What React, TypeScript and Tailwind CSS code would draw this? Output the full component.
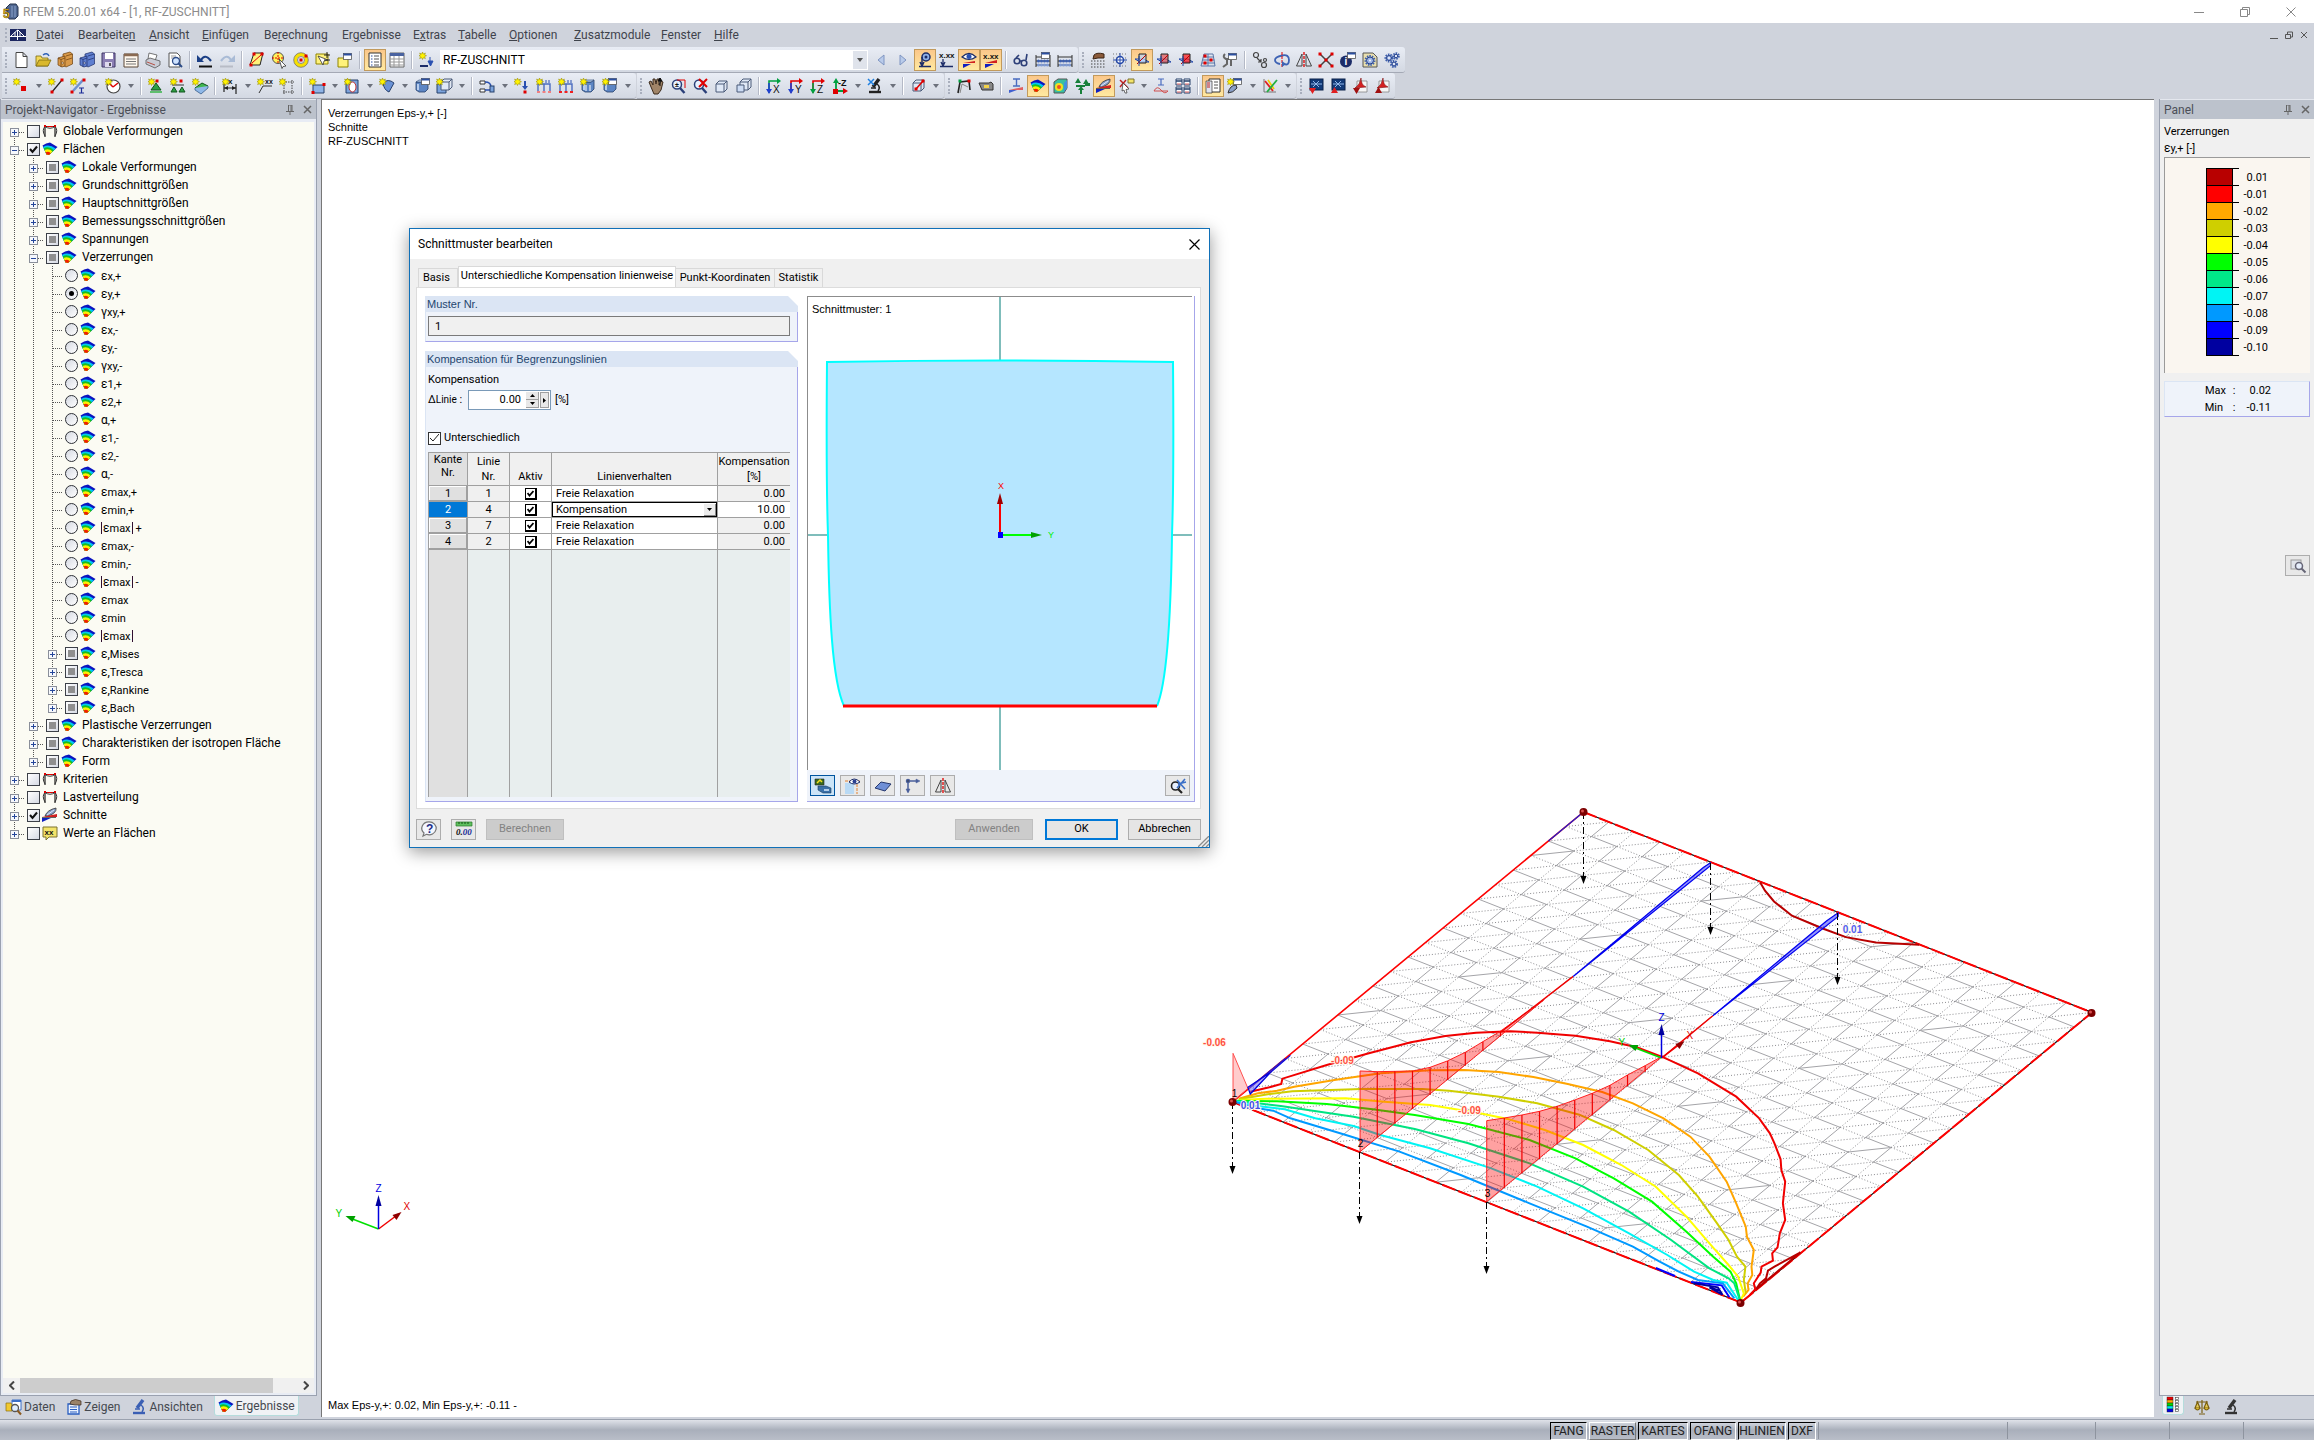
import React, { ReactNode } from "react";

const UI = "font-[Roboto,'Noto_Sans',sans-serif]";
const DLG = "font-[Roboto,'Liberation_Sans',sans-serif]";
const ARIAL = "font-['Liberation_Sans',Arial,sans-serif]";

/* ---------- small drawings ---------- */

const Star = ({ x = 0, y = 0 }: { x?: number; y?: number }) => (
  <path
    transform={`translate(${x} ${y})`}
    d="M3.5 0 4.4 2 6.4 1 5.6 3 7.5 3.7 5.6 4.6 6.4 6.6 4.4 5.7 3.5 7.5 2.7 5.7.6 6.6 1.5 4.6 0 3.7 1.5 3 .6 1 2.7 2z"
    fill="#fff200"
    stroke="#8f8400"
    strokeWidth=".5"
  />
);

const Dot = ({ x, y, c = "#e00000" }: { x: number; y: number; c?: string }) => (
  <rect x={x - 1.5} y={y - 1.5} width="3" height="3" fill={c} />
);

const Fan = () => (
  <g>
    <path d="M.5 4.5Q4 1.800 8 1.500L15.500 6 7 14 4.500 13.500z" fill="#0a14c0" />
    <path d="M1 6Q7 2.600 13.600 7.600L7 14 4.500 13.500z" fill="#00c8f0" />
    <path d="M1.800 7.200Q7 4.600 12 9.200L7 14 4.500 13.500z" fill="#16c020" />
    <path d="M2.600 9Q7 7 10.500 10.600L7 14 4.500 13.500z" fill="#fff000" />
    <path d="M3.600 11.300Q6.500 10 8.800 12.200L7 14 4.500 13.500z" fill="#f02000" />
  </g>
);

const Arch = () => (
  <g fill="none">
    <path d="M3 14V4M13 14V4M3 3.5h10" stroke="#222" strokeWidth="1.2" />
    <path d="M3 13Q-.5 7 3 3.5M13 13Q16.500 7 13 3.500M3 3.500Q8 7 13 3.500" stroke="#333" />
    <path d="M5 3.500h6" stroke="#e00000" />
    <rect x="2" y="2" width="2" height="2" fill="#e00000" />
    <rect x="12" y="2" width="2" height="2" fill="#e00000" />
  </g>
);

const Feather = () => (
  <g>
    <path d="M3 9Q5 3 14 1Q15 6 6 9z" fill="#8aa0c8" stroke="#333" strokeWidth=".8" />
    <path d="M5 8 12 3" stroke="#dfe8fa" />
    <path d="M0 10h15V7z" fill="#d02020" />
    <path d="M0 11h9L0 15z" fill="#1020c0" />
    <path d="M0 10.500h14" stroke="#222" strokeWidth=".7" />
  </g>
);

const Cup = () => (
  <g>
    <path d="M2 4h9l3-2v9l-3 3H5L2 12z" fill="#5d86c4" stroke="#27406b" strokeWidth=".8" />
    <path d="M2 4 5 2h9l-3 2z" fill="#b4cdf0" stroke="#27406b" strokeWidth=".6" />
    <path d="M4 6v6" stroke="#d6e5fb" strokeWidth="1.500" />
  </g>
);

const Cabinet = ({ c, d }: { c: string; d: string }) => (
  <g stroke={d} strokeWidth=".7">
    <path d="M6 2 13 0 15.500 2v10L9 15 6 13z" fill={c} />
    <path d="M1 6 8 4v10l-3 1-4-2z" fill={c} />
    <path d="M1 6 4 7.500 8 6M4 7.500V15M9 4l6.500-2M9 8l6-2" fill="none" />
    <circle cx="5.500" cy="11" r="1" fill="#fff" />
  </g>
);

const Win = ({ x = 6, y = 0 }: { x?: number; y?: number }) => (
  <g transform={`translate(${x} ${y})`}>
    <rect x=".5" y=".5" width="8" height="6" fill="#fff" stroke="#555" strokeWidth=".8" />
    <path d="M.5 1.500h8" stroke="#2b4fa0" strokeWidth="2" />
  </g>
);

const Lens = () => (
  <g>
    <circle cx="7" cy="6.500" r="4.500" fill="#e8f1ff" stroke="#2a3f78" strokeWidth="1.500" />
    <path d="M10 10l4.500 5" stroke="#2a3f78" strokeWidth="2.400" />
  </g>
);

const Beads = () => (
  <g>
    <path d="M1 3v12M15 3v12M1 5h14M1 9h14M1 13h14" stroke="#333" fill="none" />
    {[3, 6, 9, 12].map((x) => (
      <g key={x}>
        <circle cx={x + 0.5} cy="9" r="1.500" fill="#3b5fb0" />
        <circle cx={x + 0.5} cy="13" r="1.500" fill="#7f9bd6" />
      </g>
    ))}
  </g>
);

const Frames = ({ c = "#f02020" }: { c?: string }) => (
  <g fill="none">
    <path d="M2 13V6h6v7M8 6h6v7" stroke="#4a6cc0" strokeWidth="1.400" />
    <path d="M3 2v3M6 2v3M10 2v3M13 2v3" stroke="#2a50b0" />
    <path d="M1 14h3M6.500 14h3M12 14h3" stroke={c} strokeWidth="2" />
  </g>
);

const Planes = ({ c }: { c: string }) => (
  <g strokeWidth="1">
    <path d="M1 7h9l5 3H6z" fill="#cfe0fb" stroke="#2448a8" />
    <path d="M5 2h7v9H5z" fill={c} fillOpacity=".7" stroke="#222" />
    <path d="M3 12 12 3" stroke="#c00000" />
    <path d="M5 14V4" stroke="#2448a8" />
  </g>
);

const Gear = ({ x, y, r }: { x: number; y: number; r: number }) => (
  <g>
    <circle cx={x} cy={y} r={r} fill="none" stroke="#3d5fae" strokeWidth="2" strokeDasharray="1.500 1" />
    <circle cx={x} cy={y} r={r - 1} fill="#9db4e4" stroke="#24408a" />
    <circle cx={x} cy={y} r=".9" fill="#fff" />
  </g>
);

const Micro = ({ c = "#222" }: { c?: string }) => (
  <g fill="none" stroke={c}>
    <path d="M12 1 6 9" strokeWidth="3.400" />
    <path d="M10 6q4 3 1 7M4 10h5" strokeWidth="1.500" />
    <path d="M2 14h12" strokeWidth="2.400" />
  </g>
);

const Box = ({ x = 2, y = 2 }: { x?: number; y?: number }) => (
  <g transform={`translate(${x} ${y})`} fill="#dfe8f6" stroke="#4a5a78">
    <path d="M0 4h8v8H0zM0 4l3-3h8l-3 3M8 12l3-3V1" />
  </g>
);

const AxisPair = ({ a, b, l }: { a: string; b: string; l: string }) => (
  <g>
    <path d="M3 15V3h10" fill="none" stroke={a} strokeWidth="1.600" />
    <path d="M11 0l4 3-4 3z" fill={a} />
    <path d="M3 5v8" stroke={b} strokeWidth="1.600" />
    <path d="M0 11h6l-3 5z" fill={b} />
    <text x="7" y="15" fontSize="10" fontFamily="Liberation Sans" fill="#111">
      {l}
    </text>
  </g>
);

const Label = ({ x, y, s, t, c = "#111" }: { x: number; y: number; s: number; t: string; c?: string }) => (
  <text x={x} y={y} fontSize={s} fontWeight="700" fontFamily="Liberation Sans" fill={c}>
    {t}
  </text>
);

const Screen = ({ up }: { up?: boolean }) => (
  <g>
    <rect x="2" y="1" width="13" height="11" fill="#123a78" stroke="#0a2148" />
    <path d="M5 3l6 6M11 3 5 9M3 6h11" stroke="#8fb6ea" />
    <path d={up ? "M1 15h7L4.500 9z" : "M1 10h7l-3.500 6z"} fill="#e02020" />
  </g>
);

const Pdf = ({ up }: { up?: boolean }) => (
  <g>
    <path d="M5 3h10v11H5z" fill="#f6f6f6" stroke="#777" strokeWidth=".7" />
    <path d="M9 0Q8 7 3 10L14 9Q9 7 9 0z" fill="#d42020" stroke="#801010" strokeWidth=".6" />
    <path d={up ? "M1 15h7L4.500 9z" : "M1 10h7l-3.500 6z"} fill="#a01010" />
  </g>
);

const icons: Record<string, ReactNode> = {
  fan: <Fan />,
  arch: <Arch />,
  feather: <Feather />,
  note: (
    <g>
      <path d="M1 2h14v10H7l-3 3v-3H1z" fill="#f3e46a" stroke="#7c7230" />
      <Label x={2.500} y={10} s={8} t="xx" />
    </g>
  ),
  neu: <path d="M3 .5h7l4 4v11H3zM10 .5v4h4" fill="#fff" stroke="#444" />,
  open: (
    <g stroke="#7b6a10" strokeWidth=".8">
      <path d="M1 4h5l1 2h6v8H1z" fill="#f3d95a" />
      <path d="M1 14 4 8h12l-3 6z" fill="#d9b82c" />
      <path d="M8 3q4-3 6 1" fill="none" stroke="#2f62b8" strokeWidth="1.500" />
    </g>
  ),
  cab1: <Cabinet c="#d99a4a" d="#6a3e0c" />,
  cab2: <Cabinet c="#5f7fd0" d="#1c2c68" />,
  save: (
    <g>
      <path d="M1 1h13v14H1z" fill="#8b7fb4" stroke="#3e3766" />
      <path d="M4 1h8v6H4z" fill="#fff" />
      <path d="M4 10h7v5H4z" fill="#ded9ee" />
      <path d="M9 11v3" stroke="#222" strokeWidth="1.500" />
    </g>
  ),
  report: (
    <g>
      <path d="M1 2h14v13H1z" fill="#fff8ee" stroke="#5a4636" />
      <path d="M1 3h14" stroke="#8a6a52" strokeWidth="2.500" />
      <path d="M3 7h10M3 9.500h10M3 12h10" stroke="#777" />
    </g>
  ),
  print: (
    <g stroke="#555" strokeWidth=".8">
      <path d="M4 1l8 2-2 6-7-2z" fill="#fff" />
      <path d="M1 8l4-2 10 3v4l-5 3-9-4z" fill="#c9ccd6" />
      <path d="M2 10l8 3" stroke="#b03020" />
    </g>
  ),
  preview: (
    <g>
      <path d="M2 1h8l3 3v11H2z" fill="#fff" stroke="#555" />
      <path d="M4 4h5M4 6h4" stroke="#999" />
      <circle cx="9" cy="9" r="3.500" fill="#cfe3ff" stroke="#2d4c88" strokeWidth="1.300" />
      <path d="M11 11l4 4" stroke="#2d4c88" strokeWidth="2" />
    </g>
  ),
  undo: (
    <g>
      <path d="M4 8Q8 1 14 9" fill="none" stroke="#1b3f86" strokeWidth="2.200" />
      <path d="M0 3v7h7z" fill="#1b3f86" />
      <path d="M2 14.500h13" stroke="#111" strokeWidth="2" />
    </g>
  ),
  redo: (
    <g>
      <path d="M12 8Q8 1 2 9" fill="none" stroke="#a9bbd6" strokeWidth="2.200" />
      <path d="M16 3v7H9z" fill="#a9bbd6" />
      <path d="M1 14.500h13" stroke="#b8bcc6" strokeWidth="2" />
    </g>
  ),
  selPar: (
    <g>
      <path d="M5 1h9l-3 12H1z" fill="#fff27a" stroke="#222" />
      <path d="M3 11 12 3" stroke="#e00000" />
      <Dot x={5} y={2} />
      <Dot x={13} y={2} />
      <Dot x={2} y={13} />
    </g>
  ),
  selCirc: (
    <g>
      <circle cx="7" cy="6" r="5.500" fill="#fff25a" stroke="#555" />
      <path d="M7 0v12M1 6h12" stroke="#e00000" strokeDasharray="2 1" />
      <path d="M8 7l7 7-3 .5-1 2z" fill="#fff" stroke="#333" strokeWidth=".8" />
    </g>
  ),
  selRing: (
    <g>
      <circle cx="8" cy="8" r="5.500" fill="none" stroke="#f6e000" strokeWidth="3.500" />
      <circle cx="8" cy="8" r="7.300" fill="none" stroke="#666" strokeWidth=".7" />
      <circle cx="8" cy="8" r="3.500" fill="none" stroke="#666" strokeWidth=".7" />
      <Dot x={8} y={8} />
      <Dot x={13} y={4} />
    </g>
  ),
  selPlus: (
    <g>
      <path d="M1 2h12v10H1z" fill="#fff27a" stroke="#8f8400" />
      <path d="M3 4l5 9 1-4 4-1z" fill="#fff" stroke="#333" strokeWidth=".8" />
      <path d="M9 3h6M12 0v6M9 8h6" stroke="#222" />
    </g>
  ),
  selWin: (
    <g>
      <path d="M1 6h10v9H1z" fill="#fff27a" stroke="#8f8400" />
      <Win x={6} y={1} />
    </g>
  ),
  list: (
    <g>
      <path d="M2 1h12v14H2z" fill="#fff" stroke="#333" />
      <path d="M4 4h1.500M4 7h1.500M4 10h1.500M4 13h1.500" stroke="#2b4fa0" />
      <path d="M7 4h5M7 7h5M7 10h5M7 13h5" stroke="#555" />
    </g>
  ),
  table: (
    <g>
      <path d="M1 1h14v14H1z" fill="#fff" stroke="#666" />
      <path d="M1 2.500h14" stroke="#4a63a0" strokeWidth="3" />
      <path d="M1 7h14M1 10h14M1 13h14M5 4v11M10 4v11" stroke="#999" />
    </g>
  ),
  starLoad: (
    <g>
      <Star />
      <path d="M1 14h8" stroke="#1c2c68" strokeWidth="2" />
      <path d="M11 5v5M9 9h5l-2.500 5z" fill="#2a50b0" stroke="#2a50b0" />
    </g>
  ),
  prev: <path d="M11 3v10L5 8z" fill="#b9cbea" stroke="#7f95c2" />,
  next: <path d="M5 3v10l6-5z" fill="#b9cbea" stroke="#7f95c2" />,
  resP: (
    <g>
      <circle cx="9" cy="5" r="4" fill="#8fb0e8" stroke="#1c2c68" strokeWidth="1.500" />
      <circle cx="9" cy="5" r="1.500" fill="#1c2c68" />
      <path d="M5 5v7M3 10l2 4 2-4M2 14.500h12" stroke="#1c2c68" strokeWidth="1.500" fill="none" />
    </g>
  ),
  xxLoad: (
    <g>
      <Label x={0} y={6} s={8} t="x.xx" />
      <path d="M4 7v5M2 10l2 4 2-4M1 14.500h13" stroke="#1c2c68" strokeWidth="1.300" fill="none" />
    </g>
  ),
  eye: (
    <g>
      <path d="M1 5Q8-2 15 5 8 10 1 5z" fill="#fff" stroke="#1c2c68" strokeWidth="1.200" />
      <circle cx="8" cy="4.500" r="2.500" fill="#2a50b0" />
      <path d="M2 11h12v-2z" fill="#d02020" />
      <path d="M2 12v4l8-4z" fill="#1020c0" />
    </g>
  ),
  xxx: (
    <g>
      <Label x={0} y={7} s={8} t="x.xx" />
      <path d="M2 11h12V8z" fill="#d02020" />
      <path d="M2 12v4l9-4z" fill="#1020c0" />
    </g>
  ),
  glasses: (
    <g fill="none" stroke="#2d3f78" strokeWidth="1.600">
      <circle cx="4" cy="9" r="2.800" />
      <circle cx="11" cy="11" r="2.800" />
      <path d="M6 9h3M3 6l3-3M13 8l1-6" />
    </g>
  ),
  beads: <Beads />,
  beadsWin: (
    <g>
      <Beads />
      <Win x={6} y={0} />
    </g>
  ),
  handGrid: (
    <g>
      <path d="M4 3q3-3 10-1v4H8L3 7z" fill="#8a5a3a" stroke="#3b2414" />
      <path d="M1 9h14M1 12h14M1 15h14" stroke="#444" strokeDasharray="1.500 1.500" />
    </g>
  ),
  snap: (
    <g>
      <path d="M1 2h14M1 14h14M1 6h14M1 10h14" stroke="#777" strokeDasharray="1 2" />
      <circle cx="8" cy="8" r="3.500" fill="#fff" stroke="#2448a8" strokeWidth="1.500" />
      <path d="M8 1v14M1 8h14" stroke="#2448a8" />
    </g>
  ),
  pl1: <Planes c="#b9d2f6" />,
  pl2: <Planes c="#e05050" />,
  pl3: <Planes c="#ff1010" />,
  grid3: (
    <g>
      <path d="M4 2h9l2 12H1zM2.500 8h12M8 2v12M3 5h11M2 11h13" fill="none" stroke="#5a76a8" />
      <Dot x={5} y={4} />
      <Dot x={11} y={8} />
      <Dot x={5} y={11} />
    </g>
  ),
  clampWin: (
    <g>
      <path d="M3 2q-3 3 1 5h4M5 8v4l-4 3M9 8v6" fill="none" stroke="#666" strokeWidth="2" />
      <Win x={6} y={1} />
    </g>
  ),
  link: (
    <g fill="none" stroke="#444" strokeWidth="1.200">
      <circle cx="4" cy="3" r="2.500" />
      <circle cx="12" cy="13" r="2.500" />
      <circle cx="13" cy="8" r="1.500" />
      <path d="M5 6l4 4M9 7v3H6" />
    </g>
  ),
  rotate: (
    <g fill="none">
      <path d="M6 12Q1 11 1 8t7-4.500 7 4.500-5 4" stroke="#3d62b4" strokeWidth="1.800" />
      <path d="M8 0v16" stroke="#e00000" strokeDasharray="3 1" />
      <path d="M8 9l4 3-4 3z" fill="#3d62b4" />
    </g>
  ),
  mirror: (
    <g fill="none" stroke="#444">
      <path d="M6 2v12H.5zM10 2v12h5.500z" />
      <path d="M8 0v16" stroke="#e00000" strokeWidth="1.300" strokeDasharray="3 1" />
    </g>
  ),
  cross: (
    <g>
      <path d="M2 2l12 12M14 2 2 14" stroke="#444" strokeWidth="1.500" />
      <Dot x={2} y={2} />
      <Dot x={14} y={2} />
      <Dot x={2} y={14} />
      <Dot x={14} y={14} />
      <Dot x={8} y={8} />
    </g>
  ),
  info: (
    <g>
      <circle cx="6" cy="9.500" r="6" fill="#1c2c68" />
      <Label x={4.500} y={13} s={10} t="i" c="#fff" />
      <Win x={7} y={0} />
    </g>
  ),
  gearDoc: (
    <g>
      <path d="M1 1h10l4 4v10H1z" fill="#e9dfae" stroke="#555" />
      <Gear x={8} y={8.500} r={4.500} />
    </g>
  ),
  gears: (
    <g>
      <Gear x={5} y={6} r={3.500} />
      <Gear x={12} y={4} r={2.800} />
      <Gear x={10} y={12} r={3} />
    </g>
  ),
  node: (
    <g>
      <Star />
      <rect x="8" y="8" width="5" height="5" fill="#e00000" />
    </g>
  ),
  line: (
    <g>
      <path d="M4 14 14 2" stroke="#222" strokeWidth="1.200" />
      <Star />
      <Dot x={14} y={2} />
      <Dot x={4} y={14} />
    </g>
  ),
  member: (
    <g>
      <path d="M3 13 13 2" stroke="#6f93cf" strokeWidth="2.500" />
      <Star />
      <Dot x={14} y={2} />
      <Dot x={2} y={14} />
      <path d="M9 10h5M11.500 10v5M9 15h5" stroke="#1c2c98" strokeWidth="1.200" />
    </g>
  ),
  arc: (
    <g>
      <circle cx="8.500" cy="8.500" r="6.500" fill="#fff" stroke="#444" strokeWidth="1.200" />
      <path d="M8 9 4 5M8 9l5-4" stroke="#e00000" strokeWidth="1.500" />
      <Star />
    </g>
  ),
  support: (
    <g>
      <path d="M8 5l5 7H3z" fill="#2ea043" stroke="#10541e" />
      <path d="M2 13h12v2H2z" fill="#5fbf6f" />
      <Dot x={9} y={3} />
      <Star />
    </g>
  ),
  support2: (
    <g>
      <path d="M4 9l3 5H1zM12 9l3 5H9z" fill="#2ea043" stroke="#10541e" />
      <path d="M2 7h12" stroke="#333" />
      <Dot x={11} y={3} />
      <Star />
    </g>
  ),
  supportSurf: (
    <g>
      <path d="M3 10l7-5 6 3-7 6z" fill="#3fb650" stroke="#10541e" />
      <path d="M3 10v2l6 4 7-6V8" fill="#8fb8e8" stroke="#285080" strokeWidth=".7" />
      <Star />
    </g>
  ),
  dim: (
    <g>
      <path d="M2 4v10M14 6v10M2 10h12" stroke="#222" strokeWidth="1.200" />
      <path d="M2 10l4-2v4zM14 10l-4-2v4z" fill="#222" />
      <Label x={6} y={6} s={8} t="x" />
      <Star />
    </g>
  ),
  dimxx: (
    <g>
      <path d="M2 15 6 8h9" fill="none" stroke="#333" />
      <Label x={8} y={6} s={7} t="xx" />
      <Star />
    </g>
  ),
  frameGrid: (
    <g>
      <path d="M4 4h11M4 14h11M5 2v14M13 2v14" stroke="#444" strokeDasharray="1.500 1" />
      <Star />
    </g>
  ),
  surf: (
    <g>
      <path d="M4 7h11v8H4z" fill="#8fb4e6" stroke="#27406b" />
      <Dot x={15} y={6.500} />
      <Dot x={4} y={14.500} />
      <Star />
    </g>
  ),
  opening: (
    <g>
      <path d="M2 2h12v13H2z" fill="#7ba3dc" stroke="#27406b" />
      <ellipse cx="8.500" cy="9" rx="3.500" ry="5" fill="#fff" stroke="#c03030" />
      <Star />
    </g>
  ),
  shell: (
    <g>
      <path d="M4 5Q9 0 15 5l-5 9Q5 12 4 5z" fill="#6b93d6" stroke="#27406b" />
      <Star />
    </g>
  ),
  cup: <Cup />,
  cupWin: (
    <g>
      <Cup />
      <Win x={7} y={0} />
    </g>
  ),
  cupBox: (
    <g>
      <path d="M1 6h9v9H1z" fill="#7ba3dc" stroke="#27406b" />
      <Box x={5} y={0} />
      <Star />
    </g>
  ),
  connect: (
    <g>
      <path d="M1 3h5v3H1zM1 11h5v3H1z" fill="#fff" stroke="#333" />
      <path d="M6 4q6 0 6 5M6 12h6" stroke="#2a50b0" strokeWidth="1.400" fill="none" />
      <rect x="11" y="8" width="4" height="6" fill="#7ba3dc" stroke="#27406b" />
    </g>
  ),
  load1: (
    <g>
      <path d="M11 3v6" stroke="#2a50b0" strokeWidth="2" />
      <path d="M8 8h6l-3 4z" fill="#2a50b0" />
      <Dot x={11} y={14} />
      <Star />
    </g>
  ),
  load2: (
    <g>
      <Frames c="#f08080" />
      <Star />
    </g>
  ),
  load3: (
    <g>
      <Frames />
      <Star />
    </g>
  ),
  load4: (
    <g>
      <Cup />
      <path d="M6 7v6M10 7v6" stroke="#fff" />
      <Star />
    </g>
  ),
  load5: (
    <g>
      <Cup />
      <Win x={6} y={0} />
      <Star />
    </g>
  ),
  hand: (
    <g>
      <path d="M3 9 1 4l2-1 2 4V1h2l1 5 1-5h2v6l2-4 2 1-2 8-3 4H6z" fill="#a08468" stroke="#3b2a1c" />
      <path d="M12 0l2 3h-4zM12 8V0" stroke="#111" />
    </g>
  ),
  zoomWin: (
    <g>
      <Lens />
      <path d="M7 2h8v8" fill="none" stroke="#e00000" />
      <Label x={5} y={9} s={7} t="±" />
    </g>
  ),
  zoomX: (
    <g>
      <Lens />
      <path d="M7 1l8 8M15 1 7 9" stroke="#e00000" strokeWidth="2" />
    </g>
  ),
  cube: <Box />,
  cubes: (
    <g>
      <Box x={4} y={0} />
      <path d="M1 7h7v7H1z" fill="#cddcf4" stroke="#4a5a78" />
    </g>
  ),
  ax1: <AxisPair a="#00a040" b="#2040d0" l="X" />,
  ax2: <AxisPair a="#e00000" b="#2040d0" l="Y" />,
  ax3: <AxisPair a="#e00000" b="#00a040" l="Z" />,
  ax4: (
    <g>
      <path d="M4 13V4M4 13h8" stroke="#00a040" strokeWidth="1.800" />
      <path d="M1 5h6L4 0z" fill="#00a040" />
      <path d="M11 10l5 3-5 3zM1 11h5v5H1z" fill="#e00000" />
      <Label x={6} y={8} s={9} t="-Z" />
    </g>
  ),
  micro: (
    <g>
      <Micro />
      <path d="M1 1l6 6M7 1 1 7" stroke="#2080e0" strokeWidth="1.500" />
    </g>
  ),
  microBlue: <Micro c="#3a5fb4" />,
  microDark: <Micro c="#333" />,
  clip: (
    <g>
      <Box x={3} y={1} />
      <path d="M6 11 13 3" stroke="#e00000" strokeWidth="1.500" />
      <Dot x={6} y={11} />
      <Dot x={13} y={3} />
    </g>
  ),
  deform: (
    <g fill="none">
      <path d="M2 15 4 4l9-1 1 9" stroke="#222" strokeWidth="1.600" />
      <path d="M4 15 6 6l6 3" stroke="#888" />
      <Dot x={4} y={3} c="#00a040" />
      <Dot x={13} y={3} />
    </g>
  ),
  camera: (
    <g>
      <path d="M1 5h10l2-1 2 2v6H4z" fill="#888" stroke="#333" />
      <path d="M6 7h5v3H6z" fill="#f2d24a" />
    </g>
  ),
  iRed: (
    <g>
      <path d="M5 1h7M8.500 1v7M5 8h7" stroke="#4a6cc0" strokeWidth="1.400" />
      <path d="M1 12h14V9z" fill="#e06060" />
      <path d="M1 12v3l8-3z" fill="#4060d0" />
    </g>
  ),
  solidRes: (
    <g>
      <path d="M2 4 6 1h9v9l-3 5H2z" fill="#38c0a0" stroke="#555" />
      <circle cx="7" cy="9" r="4" fill="#f0e020" />
      <circle cx="7" cy="9" r="2" fill="#f05020" />
      <path d="M12 5v9l3-4V2z" fill="#4090e0" />
    </g>
  ),
  reac: (
    <g fill="#18803a">
      <path d="M2 7h9v2H2zM11 5h5v3h-5z" />
      <path d="M4 0l3 5H1zM12 1l3 5H9z" />
      <path d="M6 16v-4H4l3-4 3 4H8v4z" />
    </g>
  ),
  featherRes: <Feather />,
  pick: (
    <g>
      <path d="M2 2l8 8M8 2 2 9" stroke="#c02020" strokeWidth="1.500" />
      <path d="M5 5l6 6-3 .5L9 15H7l-1-3-2 1z" fill="#fff" stroke="#333" strokeWidth=".7" />
      <path d="M10 1h6v4h-6z" fill="#f3e46a" stroke="#7c7230" />
    </g>
  ),
  iWave: (
    <g fill="none">
      <path d="M5 1h6M8 1v6M5 7h6" stroke="#4a6cc0" strokeWidth="1.200" />
      <path d="M1 13Q4 7 8 12t7 1M1 13h14" stroke="#d05050" />
    </g>
  ),
  panelIcon: (
    <g>
      <path d="M1 1h6v6H1zM9 1h6v6H9zM1 9h6v6H1zM9 9h6v6H9z" fill="#fff" stroke="#27406b" />
      <path d="M1 3h6M9 3h6M1 11h6M9 11h6" stroke="#27406b" strokeWidth="1.500" />
      <path d="M2 6h4M10 6h4M2 14h4M10 14h4" stroke="#e06060" />
    </g>
  ),
  legend: (
    <g>
      <path d="M4 1h11v13H4z" fill="#fff" stroke="#333" />
      <path d="M1 3h6v12H1z" fill="#e0e4ee" stroke="#333" strokeWidth=".7" />
      <path d="M2 5h3M2 7h3M2 9h3" stroke="#c02020" />
      <path d="M9 4h4M9 7h4M9 10h4" stroke="#555" />
    </g>
  ),
  cutWin: (
    <g>
      <path d="M1 15q2-8 8-8l1 3q-4 5-9 5z" fill="#8aa0c8" stroke="#333" />
      <Win x={6} y={0} />
      <Star />
    </g>
  ),
  iso: (
    <g fill="none" strokeWidth="1.800">
      <path d="M2 1v13h12" stroke="#777" strokeWidth="1" />
      <path d="M3 3l8 10" stroke="#e02020" />
      <path d="M6 2l6 9" stroke="#f0d000" />
      <path d="M15 2 5 14" stroke="#20b040" />
    </g>
  ),
  scrDown: <Screen />,
  scrUp: <Screen up />,
  pdfDown: <Pdf />,
  pdfUp: <Pdf up />,
  daten: (
    <g>
      <path d="M6 1h9v10H6z" fill="#fff" stroke="#3a6fc8" />
      <path d="M6 2h9" stroke="#3a6fc8" strokeWidth="2" />
      <path d="M0 4h5l1 2v6H0z" fill="#f2c930" stroke="#8a6d10" strokeWidth=".7" />
      <circle cx="9" cy="9" r="3.500" fill="#dfeeff" stroke="#555" strokeWidth="1.300" />
      <path d="M11.500 11.500l3.500 4" stroke="#8a5a20" strokeWidth="2" />
    </g>
  ),
  zeigen: (
    <g>
      <path d="M2 5h11v10H2z" fill="#eaf2ff" stroke="#2b5fc0" strokeWidth="1.300" />
      <path d="M4 8h7M4 10.500h7M4 13h7" stroke="#2b5fc0" />
      <path d="M5 2q4-3 10 0v4H9L4 5z" fill="#9a8268" stroke="#3b2a1c" strokeWidth=".7" />
    </g>
  ),
  colorList: (
    <g>
      {["#f00000", "#ffa800", "#00d800", "#00e8f0", "#0000e0"].map((c, i) => (
        <g key={c}>
          <rect x="2" y={i * 3} width="6" height="3" fill={c} stroke="#222" strokeWidth=".4" />
          <rect x="10.500" y={i * 3 + 0.5} width="3" height="2" fill="#fff" stroke="#444" strokeWidth=".6" />
        </g>
      ))}
    </g>
  ),
  scales: (
    <g fill="none" stroke="#7a5f10" strokeWidth="1.200">
      <path d="M8 1v13M2 3h12M5 15h6" />
      <path d="M1 9l2.500-6L6 9zM10 9l2.500-6L15 9z" fill="#e6cc58" />
      <path d="M1 9q2.500 4 5 0M10 9q2.500 4 5 0" fill="#d9b82c" />
    </g>
  ),
  help: (
    <g>
      <path d="M8 .8a7 6.500 0 1 1-2.500 12.500L2 15l1-3A7 6.500 0 0 1 8 .8z" fill="#f4f7ff" stroke="#777" strokeWidth="1.200" />
      <Label x={5} y={12} s={12} t="?" c="#1c2c88" />
    </g>
  ),
  units: (
    <g>
      <path d="M0 1h16v4H0z" fill="#5fbf5f" stroke="#2a7a2a" strokeWidth=".7" />
      <path d="M3 1v2M6 1v2M9 1v2M12 1v2" stroke="#155015" />
      <text x="0" y="14" fontSize="9" fontStyle="italic" fontWeight="700" fontFamily="Liberation Serif" fill="#111">
        0.<tspan fill="#1c2c98">00</tspan>
      </text>
    </g>
  ),
  renderMode: (
    <g>
      <path d="M0 1h9v6H0z" fill="#3a6a20" stroke="#222" strokeWidth=".6" />
      <path d="M2 5l3-3 2 2" stroke="#f4e020" strokeWidth="1.500" fill="none" />
      <path d="M3 8h8l5 2v5H8L3 12z" fill="#3a70a8" stroke="#1c3c60" strokeWidth=".6" />
      <path d="M9 12h5" stroke="#dcecff" strokeWidth="1.500" />
    </g>
  ),
  showDim: (
    <g>
      <path d="M0 5h9v11H0z" fill="#b9daf5" />
      <path d="M0 3h16M12 6v10" stroke="#e08030" strokeDasharray="3 1" />
      <path d="M4 4Q9-2 15 4 9 8 4 4z" fill="#fff" stroke="#1c2c68" />
      <circle cx="9.500" cy="3.500" r="2" fill="#2a3f90" />
    </g>
  ),
  plate: <path d="M0 10 6 4l10 2-6 7z" fill="#6f8fd6" stroke="#26386e" />,
  axes: (
    <g stroke="#4a5f9a" strokeWidth="1.500">
      <path d="M3 3h10M3 3v11" />
      <path d="M11 1l4 2-4 2zM1 11h4l-2 4z" fill="#4a5f9a" strokeWidth=".5" />
      <circle cx="3" cy="3" r="1.500" fill="#333" />
    </g>
  ),
  zoomFit: (
    <g>
      <circle cx="5.500" cy="8" r="4" fill="#e6eefc" stroke="#222" strokeWidth="1.600" />
      <path d="M8 11l4 4" stroke="#222" strokeWidth="2.200" />
      <path d="M7 2l8 9M15 1 7 10M8 6l8-2" stroke="#3a6fc8" strokeWidth="1.600" />
    </g>
  ),
  zoomBox: (
    <g>
      <rect x="1" y="2" width="10" height="9" fill="#dfe3ea" stroke="#999" />
      <circle cx="9" cy="8" r="3.500" fill="#e6eefc" stroke="#667" strokeWidth="1.500" />
      <path d="M11.500 10.500l4 4" stroke="#667" strokeWidth="2" />
    </g>
  ),
};

const Icon = ({ n, s = 16 }: { n: string; s?: number }) => (
  <svg width={s} height={s} viewBox="0 0 16 16" className="shrink-0 overflow-visible" aria-hidden="true">
    {icons[n]}
  </svg>
);

/* ---------- tool bars ---------- */

/* "|" separator, "v" drop-down arrow, "*" prefix for a pressed button */
const Tools = ({ items }: { items: string }) => (
  <>
    {items.split(" ").map((raw, i) => {
      if (raw === "|") return <span key={i} className="mx-[3px] h-[18px] w-[2px] border-l border-[#b4b9c6] bg-white" />;
      if (raw === "v")
        return (
          <button key={i} aria-label="Mehr" className="flex h-[22px] w-[13px] items-center justify-center">
            <svg width="6" height="4" viewBox="0 0 6 4">
              <path d="M0 0h6L3 4z" fill="#6c717c" />
            </svg>
          </button>
        );
      const on = raw[0] === "*";
      const name = on ? raw.slice(1) : raw;
      return (
        <button
          key={i}
          aria-label={name}
          aria-pressed={on}
          className={
            on
              ? "flex h-[22px] w-[22px] items-center justify-center border border-[#c29a5c] bg-gradient-to-b from-[#fbc78a] to-[#ffe9a0]"
              : "flex h-[22px] w-[22px] items-center justify-center"
          }
        >
          <Icon n={name} />
        </button>
      );
    })}
  </>
);

const Plate = ({ children }: { children: ReactNode }) => (
  <div className="mr-px flex h-[26px] shrink-0 items-center rounded-r-[3px] border-b border-[#a4a9b5] bg-gradient-to-b from-[#e9edf5] to-[#d3d8e2] pt-px pr-[2px]">
    <span className="mx-[3px] h-[16px] border-l-2 border-dotted border-[#a9afbd]" />
    {children}
  </div>
);

const menus: [string, number, string][] = [
  ["Datei", 0, "w-[42px]"],
  ["Bearbeiten", 9, "w-[71px]"],
  ["Ansicht", 0, "w-[53px]"],
  ["Einfügen", 0, "w-[62px]"],
  ["Berechnung", 2, "w-[78px]"],
  ["Ergebnisse", 2, "w-[71px]"],
  ["Extras", 1, "w-[45px]"],
  ["Tabelle", 0, "w-[51px]"],
  ["Optionen", 0, "w-[65px]"],
  ["Zusatzmodule", 0, "w-[87px]"],
  ["Fenster", 0, "w-[53px]"],
  ["Hilfe", 0, "w-[40px]"],
];

/* ---------- navigator ---------- */

type Row = { l: number; e?: "+" | "-"; c: "off" | "on" | "mix" | "r" | "R"; i: string; t: ReactNode; k: string; last?: boolean };

const G = ({ s, sub, bar, tail }: { s: string; sub: string; bar?: boolean; tail?: string }) => (
  <span className="flex items-baseline pt-[2px] leading-[16px]">
    {bar && <span className="mr-px h-[12px] self-center border-l border-[#301030]" />}
    <span className="text-[12px]">{s}</span>
    <span className="text-[11px]">{sub}</span>
    {bar && <span className="ml-px h-[12px] self-center border-l border-[#301030]" />}
    {tail && <span className="ml-[3px] text-[11px]">{tail}</span>}
  </span>
);

const rad = (s: string, sub: string, bar?: boolean, tail?: string): Row => ({
  l: 2,
  c: s === "ε" && sub === "y,+" ? "R" : "r",
  i: "fan",
  t: <G s={s} sub={sub} bar={bar} tail={tail} />,
  k: (bar ? "|" : "") + s + sub + (tail ?? ""),
});
const txt = (l: number, e: "+" | "-", c: Row["c"], i: string, t: string, last?: boolean): Row => ({ l, e, c, i, t, k: t, last });

const rows: Row[] = [
  txt(0, "+", "off", "arch", "Globale Verformungen"),
  txt(0, "-", "on", "fan", "Flächen"),
  txt(1, "+", "mix", "fan", "Lokale Verformungen"),
  txt(1, "+", "mix", "fan", "Grundschnittgrößen"),
  txt(1, "+", "mix", "fan", "Hauptschnittgrößen"),
  txt(1, "+", "mix", "fan", "Bemessungsschnittgrößen"),
  txt(1, "+", "mix", "fan", "Spannungen"),
  txt(1, "-", "mix", "fan", "Verzerrungen"),
  rad("ε", "x,+"),
  rad("ε", "y,+"),
  rad("γ", "xy,+"),
  rad("ε", "x,-"),
  rad("ε", "y,-"),
  rad("γ", "xy,-"),
  rad("ε", "1,+"),
  rad("ε", "2,+"),
  rad("α", ",+"),
  rad("ε", "1,-"),
  rad("ε", "2,-"),
  rad("α", ",-"),
  rad("ε", "max,+"),
  rad("ε", "min,+"),
  rad("ε", "max", true, "+"),
  rad("ε", "max,-"),
  rad("ε", "min,-"),
  rad("ε", "max", true, "-"),
  rad("ε", "max"),
  rad("ε", "min"),
  rad("ε", "max", true),
  ...["Mises", "Tresca", "Rankine", "Bach"].map(
    (n, i): Row => ({ l: 2, e: "+", c: "mix", i: "fan", t: <G s="ε," sub={n} />, k: n, last: i === 3 }),
  ),
  txt(1, "+", "mix", "fan", "Plastische Verzerrungen"),
  txt(1, "+", "mix", "fan", "Charakteristiken der isotropen Fläche"),
  txt(1, "+", "mix", "fan", "Form", true),
  txt(0, "+", "off", "arch", "Kriterien"),
  txt(0, "+", "off", "arch", "Lastverteilung"),
  txt(0, "+", "on", "feather", "Schnitte"),
  txt(0, "+", "off", "note", "Werte an Flächen", true),
];

const Guide = () => (
  <svg width="19" height="18" className="shrink-0" aria-hidden="true">
    <path d="M9.500 0v18" stroke="#555" strokeDasharray="1 1" />
  </svg>
);

const Join = ({ e, last, first }: { e?: string; last?: boolean; first?: boolean }) => (
  <svg width="22" height="18" className="shrink-0" aria-hidden="true">
    <path d={`M9.500 ${first ? 10 : 0}V${last ? 10 : 18}M10 10.500h10`} stroke="#555" strokeDasharray="1 1" />
    {e && (
      <>
        <rect x="5.500" y="6.500" width="8" height="8" fill="#f6f8fc" stroke="#8a8f9a" />
        <path d={e === "+" ? "M7 10.500h5M9.500 8v5" : "M7 10.500h5"} stroke="#24469a" />
      </>
    )}
  </svg>
);

const Tick = ({ label, state, id }: { label?: string; state: "off" | "on" | "mix"; id?: string }) => (
  <span className="grid size-[13px] shrink-0 place-items-center">
    <input
      id={id}
      aria-label={label}
      type="checkbox"
      defaultChecked={state === "on"}
      className="size-[13px] appearance-none border border-[#3c4048] bg-gradient-to-br from-white to-[#d6dae4] [grid-area:1/1]"
    />
    {state === "on" && (
      <svg width="9" height="9" viewBox="0 0 9 9" className="pointer-events-none [grid-area:1/1]">
        <path d="M1 4l2.500 3L8 1.500" fill="none" stroke="#111" strokeWidth="2" />
      </svg>
    )}
    {state === "mix" && <span className="pointer-events-none size-[7px] bg-[#8f8f8f] [grid-area:1/1]" />}
  </span>
);

const TreeRow = ({ r, first }: { r: Row; first: boolean }) => (
  <li className="flex h-[18px] items-center pl-[2px]">
    {Array.from({ length: r.l }, (_, i) => (
      <Guide key={i} />
    ))}
    {r.e ? (
      <button aria-label={r.e === "+" ? "Aufklappen" : "Zuklappen"} className="flex">
        <Join e={r.e} last={r.last} first={first} />
      </button>
    ) : (
      <Join />
    )}
    <label className="flex items-center">
      {r.c === "r" || r.c === "R" ? (
        <span className="grid size-[13px] place-items-center">
          <input
            type="radio"
            name="verzerrung"
            aria-label={r.k}
            defaultChecked={r.c === "R"}
            className="peer size-[13px] appearance-none rounded-full border border-[#2e3138] bg-gradient-to-br from-[#d5d9e2] to-white [grid-area:1/1]"
          />
          <span className="pointer-events-none hidden size-[5px] rounded-full bg-black [grid-area:1/1] peer-checked:block" />
        </span>
      ) : (
        <Tick label={r.k} state={r.c} />
      )}
      <span className="ml-[2px] flex">
        <Icon n={r.i} />
      </span>
      <span className="ml-[5px] text-[12px] leading-[16px] whitespace-nowrap text-black">{r.t}</span>
    </label>
  </li>
);

const PanelHead = ({ t }: { t: string }) => (
  <div className="flex h-[20px] shrink-0 items-center border-t border-[#e4e7ee] bg-[#bcc2cc] pr-[4px] pl-[4px] text-[12px] text-[#4b4f58]">
    <h2 className="flex-1">{t}</h2>
    <button aria-label="Anheften" className="mr-[9px]">
      <svg width="8" height="10" viewBox="0 0 8 10">
        <path d="M2 0h4v6M2.500 0v6M0 6.500h8M4 7v3M5 0v6" fill="none" stroke="#666" />
      </svg>
    </button>
    <button aria-label="Schließen">
      <svg width="9" height="9" viewBox="0 0 9 9">
        <path d="M1 1l7 7M8 1 1 8" stroke="#666" strokeWidth="1.500" />
      </svg>
    </button>
  </div>
);

const Navigator = () => (
  <aside className="flex w-[317px] shrink-0 flex-col">
    <div className="flex min-h-0 flex-1 flex-col border-r border-b border-l border-[#9aa1b0] bg-[#e8ecf4]">
      <PanelHead t="Projekt-Navigator - Ergebnisse" />
      <ul className="mx-[2px] mt-[3px] min-h-0 flex-1 overflow-hidden bg-[#fbfbf3]">
        {rows.map((r, i) => (
          <TreeRow key={r.k + i} r={r} first={i === 0} />
        ))}
      </ul>
      <div className="mx-[2px] mb-[2px] flex h-[15px] shrink-0 items-center bg-[#f0f0f0]">
        <button aria-label="Nach links" className="flex w-[17px] justify-center">
          <svg width="6" height="9" viewBox="0 0 6 9">
            <path d="M5 .5 1 4.500l4 4" fill="none" stroke="#444" strokeWidth="2" />
          </svg>
        </button>
        <div className="h-full w-[253px] bg-[#cdcdcd]" />
        <button aria-label="Nach rechts" className="ml-auto flex w-[17px] justify-center">
          <svg width="6" height="9" viewBox="0 0 6 9">
            <path d="M1 .5l4 4-4 4" fill="none" stroke="#444" strokeWidth="2" />
          </svg>
        </button>
      </div>
    </div>
    <div className="flex h-[23px] shrink-0 items-start gap-[11px] pl-[6px] text-[12px] text-[#44484f]">
      {[
        ["daten", "Daten"],
        ["zeigen", "Zeigen"],
        ["microBlue", "Ansichten"],
        ["fan", "Ergebnisse"],
      ].map(([i, t]) => (
        <button
          key={t}
          className={
            t === "Ergebnisse"
              ? "flex h-[20px] items-center gap-[2px] rounded-b-[3px] border border-t-0 border-[#b5dcdc] bg-[#f0f2f5] px-[3px]"
              : "flex h-[21px] items-center gap-[2px]"
          }
        >
          <Icon n={i} />
          {t}
        </button>
      ))}
    </div>
  </aside>
);

/* ---------- 3D model ---------- */

const A = { x: 1232, y: 1102 };
const U = { x: 351 / 20, y: -290 / 20 };
const V = { x: 508.5 / 20, y: 200.5 / 20 };
const P = (i: number, j: number) =>
  `${(A.x + i * U.x + j * V.x).toFixed(1)} ${(A.y + i * U.y + j * V.y).toFixed(1)}`;

const mesh = (() => {
  let solid = "";
  let dotted = "";
  for (let i = 0; i <= 20; i++)
    for (let j = 0; j <= 20; j++) {
      const even = (i + j) % 2 === 0;
      if (j < 20) {
        const s = `M${P(i, j)}L${P(i, j + 1)}`;
        if (even) solid += s;
        else dotted += s;
      }
      if (i < 20) {
        const s = `M${P(i, j)}L${P(i + 1, j)}`;
        if (even) solid += s;
        else dotted += s;
      }
      if (i < 20 && j < 20) {
        const s = `M${P(i, j)}L${P(i + 1, j + 1)}`;
        if ((4 * i + 3 * j) % 22 === 2) solid += s;
        else dotted += s;
      }
    }
  return { solid, dotted };
})();

const contours: [string, string][] = [
  ["#b80000", "1568,757 1500,800 1483,812 1478,835 1462,850 1452,868 1568,757"],
  ["#f00000", "130,275 180,262 211,252 214,236 330,195 440,160 550,127 640,108 720,98 810,94 880,98 980,107 1070,124 1140,142 1210,172 1300,220 1400,290 1460,355 1488,400 1500,430 1516,478 1518,510 1528,545 1522,610 1528,660 1514,700 1508,742 1494,760 1496,782 1466,800 1464,818 1446,850 1450,868 1436,884"],
  ["#ffa500", "100,296 150,280 200,272 245,260 350,240 470,220 600,211 690,210 780,216 870,231 960,252 1050,276 1130,310 1210,355 1280,410 1330,470 1375,545 1400,610 1425,680 1428,710 1446,750 1440,800 1442,825 1430,850 1432,870 1418,890"],
  ["#cfcf00", "100,298 180,282 240,274 420,267 580,267 650,272 780,290 880,310 990,344 1080,390 1170,450 1250,525 1300,590 1350,670 1380,720 1402,770 1424,800 1420,840 1425,880"],
  ["#ffff00", "100,300 170,296 380,295 480,305 600,315 730,340 800,356 900,390 1000,435 1100,495 1190,560 1270,650 1330,730 1380,795 1405,830 1420,880 1412,900"],
  ["#00ff00", "90,302 200,304 330,312 450,328 560,345 700,372 860,420 980,475 1080,535 1180,605 1270,695 1340,770 1385,815 1400,850 1410,900"],
  ["#00e482", "90,303 150,310 210,318 400,350 560,387 700,430 860,490 1000,560 1120,635 1230,720 1330,805 1380,835 1395,850 1410,902"],
  ["#00f4f4", "90,304 150,318 220,328 300,355 400,378 470,405 600,445 760,505 880,560 1000,625 1120,700 1220,765 1290,815 1340,840 1375,848 1405,900"],
  ["#0099ff", "90,305 150,325 190,332 235,355 380,405 520,455 680,525 860,610 1010,680 1130,740 1200,785 1250,815 1300,840 1365,850 1395,895"],
  ["#0000ff", "1282,846 1362,856 1382,892"],
  ["#0000a0", "1290,850 1352,862 1364,884 1330,862 1358,872"],
  ["#0000ff", "1190,804 1240,828"],
];

const NodeDot = ({ x, y }: { x: number; y: number }) => (
  <g>
    <circle cx={x} cy={y} r="4" fill="#7c0000" />
    <circle cx={x - 1} cy={y - 1} r="1.500" fill="#d85050" />
  </g>
);

const Drop = ({ x, y }: { x: number; y: number }) => (
  <g>
    <path d={`M${x} ${y}v66`} stroke="#000" strokeDasharray="7 3 2 3" />
    <path d={`M${x - 3} ${y + 64}h6l-3 8z`} fill="#000" />
  </g>
);

const Triad = ({ x, y }: { x: number; y: number }) => (
  <g strokeWidth="1.500" fontSize="10" fontFamily="Liberation Sans" fontWeight="400">
    <path d={`M${x} ${y}l20-15`} stroke="#f00000" />
    <path d={`M${x + 23} ${y - 17}l-9 3 4 5z`} fill="#900000" />
    <path d={`M${x} ${y}l-26-10`} stroke="#00e000" />
    <path d={`M${x - 33} ${y - 13}l10 0-3 6z`} fill="#00a000" />
    <path d={`M${x} ${y}v-26`} stroke="#0000e0" />
    <path d={`M${x - 3} ${y - 23}h6l-3-11z`} fill="#0000a0" />
    <text x={x - 3} y={y - 37} fill="#0000e0">Z</text>
    <text x={x + 25} y={y - 19} fill="#e00000">X</text>
    <text x={x - 43} y={y - 12} fill="#00d000">Y</text>
  </g>
);

const ns = { vectorEffect: "non-scaling-stroke" as const };

const Model = () => (
  <svg viewBox="322 100 1831 1317" className="h-full w-full" role="img" aria-label="Modell mit Verzerrungen">
    <g fill="none" stroke="#a4a4a8">
      <path d={mesh.dotted} strokeDasharray="1 2" stroke="#8c8c90" />
      <path d={mesh.solid} />
    </g>
    <g fill="none" stroke="#111" strokeWidth="1.200">
      <path d={`M${P(20, 0)}L${P(20, 20)}L${P(0, 20)}L${P(0, 0)}`} />
      <path d={`M${P(20, 0)}L${P(20, 20)}L${P(0, 20)}L${P(0, 0)}`} stroke="#ff0000" strokeWidth="2" strokeDasharray="14 3" />
      <path d={`M${P(0, 0)}L${P(20, 0)}`} stroke="#ff0000" strokeWidth="1.600" />
      <path d={`M${P(18, 0)}L${P(20, 0)}M${P(1, 0)}L${P(3, 0)}`} stroke="#2020d0" strokeWidth="1.200" />
    </g>
    <g transform="translate(1200 1000) scale(.38265 .33333)" fill="none" strokeWidth="2">
      {contours.map(([c, p], i) => (
        <polyline key={i} points={p} stroke={c} {...ns} />
      ))}
      <path d="M85 305V160L124 265z" fill="#ff0000" fillOpacity=".2" stroke="#ff5050" strokeWidth="1" {...ns} />
      <path d="M124 262 130 282 184 216zM184 216 235 166" fill="#6060ff" fillOpacity=".5" stroke="#0000e0" strokeWidth="1.200" {...ns} />
      <path
        d="M417 455V213L462 215 510 214 555 213 600 202 645 183 692 157 738 125 782 95 897 0z"
        fill="#ff0000" fillOpacity=".37" stroke="#ff2020" strokeWidth="1" {...ns}
      />
      <path
        d="M462 215V412M508 214V370M554 213V327M600 202V284M646 183V240M692 157V196M738 125V152M784 94V108"
        stroke="#f00000" strokeWidth="1.200" {...ns}
      />
      <path
        d="M748 605V362L794 354 840 345 886 334 932 319 978 300 1024 280 1070 256 1116 225 1162 197 1208 168z"
        fill="#ff0000" fillOpacity=".37" stroke="#ff2020" strokeWidth="1" {...ns}
      />
      <path
        d="M794 354V563M840 345V520M886 334V477M932 319V433M978 300V388M1024 280V346M1070 256V300M1116 225V259M1162 197V215"
        stroke="#f00000" strokeWidth="1.200" {...ns}
      />
    </g>
    <g transform="translate(1180 780) scale(.5995 .35714)" fill="none">
      <path d="M967 287 975 310 990 340 1020 380 1070 415 1110 440 1160 455 1232 461" stroke="#b80000" strokeWidth="2" {...ns} />
      <path d="M535 705 655 550M803 778 888 660" stroke="#f00000" strokeWidth="1.400" {...ns} />
      <path d="M655 550 884 240V232L872 245z" fill="#5050ff" fillOpacity=".6" stroke="#0000f0" strokeWidth="1.200" {...ns} />
      <path d="M888 660 1097 382V372L1078 394z" fill="#5050ff" fillOpacity=".6" stroke="#0000f0" strokeWidth="1.200" {...ns} />
    </g>
    {[[1232, 1102], [1359, 1152], [1486, 1202], [1583, 812], [1710, 863], [1837, 913]].map(([x, y]) => (
      <Drop key={x} x={x} y={y} />
    ))}
    {[[1232, 1102], [1583, 812], [2091, 1013], [1740, 1303]].map(([x, y]) => (
      <NodeDot key={x} x={x} y={y} />
    ))}
    <Triad x={1661} y={1058} />
    <Triad x={378} y={1229} />
    <g fontFamily="Liberation Sans" fontSize="10" fontWeight="700" fill="#ff5040" textAnchor="middle" stroke="#fffaf0" strokeWidth="2" paintOrder="stroke">
      <text x="1214" y="1046">-0.06</text>
      <text x="1342" y="1064">-0.09</text>
      <text x="1469" y="1114">-0.09</text>
      <text x="1250" y="1109" fill="#4050e8">0.01</text>
      <text x="1852" y="933" fill="#5060f0">0.01</text>
    </g>
    <g fontFamily="Liberation Sans" fontSize="10" fill="#000" textAnchor="middle">
      <text x="1234" y="1097">1</text>
      <text x="1360" y="1147">2</text>
      <text x="1487" y="1197">3</text>
    </g>
  </svg>
);

/* ---------- dialog ---------- */

const GroupHead = ({ t }: { t: string }) => (
  <h3
    className={`h-[16px] bg-[#dbe5f4] pl-[2px] text-[11px] leading-[17px] text-[#24466f] [clip-path:polygon(0_0,calc(100%_-_10px)_0,100%_10px,100%_100%,0_100%)] ${ARIAL}`}
  >
    {t}
  </h3>
);

const SmallBtn = ({ n, on }: { n: string; on?: boolean }) => (
  <button
    aria-label={n}
    className={
      on
        ? "flex h-[21px] w-[25px] items-center justify-center border border-[#00549e] bg-[#cce4f7]"
        : "flex h-[21px] w-[25px] items-center justify-center border border-[#adadad] bg-[#e8e8e8]"
    }
  >
    <Icon n={n} />
  </button>
);

const lines: [number, number, string, string][] = [
  [1, 1, "Freie Relaxation", "0.00"],
  [2, 4, "Kompensation", "10.00"],
  [3, 7, "Freie Relaxation", "0.00"],
  [4, 2, "Freie Relaxation", "0.00"],
];

const Pattern = () => (
  <svg viewBox="808 297 384 473" className="h-[473px] w-full" role="img" aria-label="Schnittmuster">
    <path d="M1000 297v473M808 535h384" stroke="#7fbdbb" strokeWidth="2" />
    <path
      d="M827 362Q1000 359 1173 362Q1174 480 1172 535C1171 610 1168 680 1157 706H844C832 680 829 610 828 535Q826 480 827 362z"
      fill="#b5e6ff"
    />
    <path
      d="M844 706C832 680 829 610 828 535Q826 480 827 362Q1000 359 1173 362Q1174 480 1172 535C1171 610 1168 680 1157 706"
      fill="none"
      stroke="#00ffff"
      strokeWidth="2"
    />
    <path d="M843 706h314" stroke="#ff0000" strokeWidth="3" />
    <path d="M1000 535v-34" stroke="#ff0000" strokeWidth="2" />
    <path d="M1000 493l3 11h-6z" fill="#a00000" />
    <path d="M1000 535h32" stroke="#00ff00" strokeWidth="2" />
    <path d="M1042 535l-11-3v6z" fill="#00a000" />
    <rect x="998" y="532" width="5" height="6" fill="#0000ff" />
    <g fontFamily="Liberation Sans" fontSize="9">
      <text x="998" y="489" fill="#ff0000">X</text>
      <text x="1048" y="538" fill="#00f000">Y</text>
      <text x="812" y="313" fontSize="11" fill="#000">Schnittmuster: 1</text>
    </g>
  </svg>
);

const Dialog = () => (
  <section
    role="dialog"
    aria-label="Schnittmuster bearbeiten"
    className={`absolute top-[128px] left-[87px] flex h-[620px] w-[801px] flex-col border border-[#1070b8] bg-[#f0f0f0] text-[11px] leading-[14px] text-black shadow-[0_4px_16px_rgba(0,0,0,0.4)] ${DLG}`}
  >
    <header className={`flex h-[30px] shrink-0 items-center justify-between bg-white pr-[9px] pl-[8px] ${UI}`}>
      <h2 className="text-[12px]">Schnittmuster bearbeiten</h2>
      <button aria-label="Schließen">
        <svg width="11" height="11" viewBox="0 0 11 11">
          <path d="M.5.5l10 10M10.500.5l-10 10" stroke="#000" strokeWidth="1.200" />
        </svg>
      </button>
    </header>
    <div role="tablist" className="flex h-[28px] shrink-0 items-end pl-[8px]">
      <button role="tab" className="h-[19px] w-[40px] border border-b-0 border-[#d9d9d9] pl-[4px] text-left">Basis</button>
      <button role="tab" aria-selected className="h-[21px] w-[218px] border border-b-0 border-[#d9d9d9] bg-white pb-[2px] text-center">
        Unterschiedliche Kompensation linienweise
      </button>
      <button role="tab" className="h-[19px] w-[99px] border border-b-0 border-l-0 border-[#d9d9d9]">Punkt-Koordinaten</button>
      <button role="tab" className="h-[19px] w-[48px] border border-b-0 border-l-0 border-[#d9d9d9]">Statistik</button>
    </div>
    <div className="mr-[8px] ml-[6px] flex h-[522px] shrink-0 gap-[9px] border border-[#dcdcdc] bg-white pt-[8px] pr-[5px] pb-[6px] pl-[8px]">
      <div className="flex w-[373px] flex-col gap-[9px]">
        <section>
          <GroupHead t="Muster Nr." />
          <div className="h-[30px] border-r border-b border-l border-r-[#a6a6ea] border-b-[#a6a6ea] border-l-[#dbe5f4] bg-[#eff3fa] pt-[4px] pl-[2px]">
            <input
              aria-label="Muster Nr."
              defaultValue="1"
              readOnly
              className="block h-[20px] w-[362px] border border-[#7a7a7a] bg-[#f0f0f0] pl-[6px] text-[11px]"
            />
          </div>
        </section>
        <section className="flex min-h-0 flex-1 flex-col">
          <GroupHead t="Kompensation für Begrenzungslinien" />
          <div className="flex min-h-0 flex-1 flex-col border-r border-b border-l border-r-[#a6a6ea] border-b-[#a6a6ea] border-l-[#dbe5f4] bg-[#eff3fa] pt-[6px] pb-[4px] pl-[2px]">
            <p>Kompensation</p>
            <div className="mt-[3px] flex h-[20px] items-center">
              <label htmlFor="delta" className="w-[40px] whitespace-nowrap">
                Δ<span className="text-[10px]">Linie</span> :
              </label>
              <div className="flex h-[20px] w-[83px] items-center border border-[#7a9ab8] bg-white pr-px">
                <input id="delta" defaultValue="0.00" className="w-[52px] text-right text-[11px] outline-none" />
                <div className="ml-[5px] flex h-[16px] w-[13px] flex-col">
                  {["M0 3h5L2.500 0z", "M0 0h5L2.500 3z"].map((d, i) => (
                    <button key={d} aria-label={i ? "Weniger" : "Mehr"} className="flex h-[8px] items-center justify-center border-r border-b border-[#a0a0a0] bg-[#e8e8e8]">
                      <svg width="5" height="3" viewBox="0 0 5 3"><path d={d} /></svg>
                    </button>
                  ))}
                </div>
                <button aria-label="Auswahl" className="ml-px flex h-[16px] w-[9px] items-center justify-center border border-[#a0a0a0] bg-[#e8e8e8]">
                  <svg width="3" height="5" viewBox="0 0 3 5"><path d="M0 0v5l3-2.500z" /></svg>
                </button>
              </div>
              <span className="ml-[4px]">[%]</span>
            </div>
            <label className="mt-[20px] flex h-[16px] items-center gap-[3px]">
              <span className="grid size-[13px] place-items-center">
                <input type="checkbox" defaultChecked className="size-[13px] appearance-none border border-[#333] bg-white [grid-area:1/1]" />
                <svg width="9" height="8" viewBox="0 0 9 8" className="pointer-events-none [grid-area:1/1]">
                  <path d="M0 4l3 3 6-7" fill="none" stroke="#222" />
                </svg>
              </span>
              Unterschiedlich
            </label>
            <div className="mt-[6px] flex min-h-0 w-[362px] flex-1 flex-col border-t border-l border-[#a0a0a0]">
              <table className="w-full table-fixed border-separate border-spacing-0 text-center">
                <colgroup>
                  <col className="w-[39px]" />
                  <col className="w-[42px]" />
                  <col className="w-[42px]" />
                  <col className="w-[166px]" />
                  <col />
                </colgroup>
                <thead>
                  <tr className="h-[33px] [&>th]:border-r [&>th]:border-b [&>th]:border-[#a0a0a0] [&>th]:bg-[#f0f0f0] [&>th]:p-0 [&>th]:pb-px [&>th]:align-bottom [&>th]:font-normal">
                    <th className="!bg-[#e0e0e0] !align-top leading-[13px]">Kante<br />Nr.</th>
                    <th className="leading-[15px]">Linie<br />Nr.</th>
                    <th className="leading-[15px]">Aktiv</th>
                    <th className="leading-[15px]">Linienverhalten</th>
                    <th className="!border-r-0 leading-[15px]">Kompensation<br />[%]</th>
                  </tr>
                </thead>
                <tbody>
                  {lines.map(([k, l, t, v]) => (
                    <tr key={k} className="h-[16px] [&>td]:h-[16px] [&>td]:border-r [&>td]:border-b [&>td]:border-[#a0a0a0] [&>td]:p-0 [&>td]:leading-[15px]">
                      <td className={k === 2 ? "bg-[#0078d7] text-white" : "bg-[#e0e0e0] shadow-[inset_-1px_-1px_0_#a0a0a0,inset_1px_1px_0_#fff]"}>{k}</td>
                      <td className="bg-[#f0f0f0]">{l}</td>
                      <td className="bg-white">
                        <span className="mx-auto grid size-[12px] place-items-center">
                          <input
                            type="checkbox"
                            aria-label={`Aktiv ${k}`}
                            defaultChecked
                            className="size-[12px] appearance-none border-t border-r-2 border-b-2 border-l border-black bg-white [grid-area:1/1]"
                          />
                          <svg width="7" height="7" viewBox="0 0 7 7" className="pointer-events-none mr-px mb-px [grid-area:1/1]">
                            <path d="M.5 3l2 2.500L6.500 1" fill="none" stroke="#000" strokeWidth="1.800" />
                          </svg>
                        </span>
                      </td>
                      <td className="bg-white text-left">
                        {k === 2 ? (
                          <span className="flex h-[15px] items-center border border-black">
                            <select aria-label="Linienverhalten" className="h-full flex-1 appearance-none bg-white pl-[3px] text-[11px] leading-[12px]">
                              <option>{t}</option>
                            </select>
                            <span className="pointer-events-none flex h-[12px] w-[12px] items-center justify-center border-r border-b border-[#888] bg-[#ececec]">
                              <svg width="5" height="3" viewBox="0 0 5 3"><path d="M0 0h5L2.500 3z" /></svg>
                            </span>
                          </span>
                        ) : (
                          <span className="pl-[4px]">{t}</span>
                        )}
                      </td>
                      <td className={k === 2 ? "!border-r-0 bg-white !pr-[5px] text-right" : "!border-r-0 bg-[#f0f0f0] !pr-[5px] text-right"}>{v}</td>
                    </tr>
                  ))}
                </tbody>
              </table>
              <div className="grid min-h-0 flex-1 grid-cols-[39px_42px_42px_166px_1fr] bg-[#e8eeee] [&>i]:border-r [&>i]:border-[#a0a0a0]">
                <i className="bg-[#e0e0e0]" />
                <i />
                <i />
                <i />
              </div>
            </div>
          </div>
        </section>
      </div>
      <div className="flex flex-1 flex-col border-r border-b border-[#a6a6ea]">
        <div className="mr-[2px] border-t border-l border-[#8c8c8c] bg-white">
          <Pattern />
        </div>
        <div className="flex flex-1 items-center gap-[5px] bg-[#eff3fa] pr-[4px] pl-[3px]">
          <SmallBtn n="renderMode" on />
          <SmallBtn n="showDim" />
          <SmallBtn n="plate" />
          <SmallBtn n="axes" />
          <SmallBtn n="mirror" />
          <span className="flex-1" />
          <SmallBtn n="zoomFit" />
        </div>
      </div>
    </div>
    <footer className="flex flex-1 items-center pt-[2px] pr-[8px] pl-[6px]">
      <SmallBtn n="help" />
      <span className="w-[10px]" />
      <SmallBtn n="units" />
      <button disabled className="ml-[10px] h-[21px] w-[78px] border border-[#bfbfbf] bg-[#cccccc] text-[#838383]">Berechnen</button>
      <span className="flex-1" />
      <button disabled className="h-[21px] w-[78px] border border-[#bfbfbf] bg-[#cccccc] text-[#838383]">Anwenden</button>
      <button className="ml-[12px] h-[21px] w-[73px] border-2 border-[#0078d7] bg-[#e5e5e5]">OK</button>
      <button className="ml-[10px] h-[21px] w-[73px] border border-[#adadad] bg-[#e5e5e5]">Abbrechen</button>
    </footer>
    <svg width="11" height="11" viewBox="0 0 11 11" className="absolute right-0 bottom-0" aria-hidden="true">
      <path d="M0 11 11 0M4 11l7-7M8 11l3-3" stroke="#8c8c8c" strokeWidth="1.300" />
    </svg>
  </section>
);

/* ---------- right panel ---------- */

const scale: [string, string][] = [
  ["bg-[#b80000]", "0.01"],
  ["bg-[#ff0000]", "-0.01"],
  ["bg-[#ffa800]", "-0.02"],
  ["bg-[#cfcf00]", "-0.03"],
  ["bg-[#ffff00]", "-0.04"],
  ["bg-[#00ff00]", "-0.05"],
  ["bg-[#00e888]", "-0.06"],
  ["bg-[#00f4f4]", "-0.07"],
  ["bg-[#0099ff]", "-0.08"],
  ["bg-[#0000ff]", "-0.09"],
  ["bg-[#0000a0]", "-0.10"],
];

const ColorPanel = () => (
  <aside className="flex w-[155px] shrink-0 flex-col">
    <div className="flex min-h-0 flex-1 flex-col border-b border-l border-[#9aa1b0] bg-[#f0f0f0]">
      <PanelHead t="Panel" />
      <div className={`flex flex-1 flex-col px-[4px] pt-[4px] text-[11px] text-black ${DLG}`}>
        <p className="h-[17px] leading-[17px]">Verzerrungen</p>
        <p className="h-[17px] leading-[17px]">
          <span className="text-[12px]">ε</span>y,+ [-]
        </p>
        <div className="h-[216px] border-t border-l border-[#9a9a9a] bg-[#faf6f0] pt-[10px] pl-[41px]">
          <ul className="w-[62px] [background:linear-gradient(#000,#000)_left_top/33px_1px_no-repeat] pt-px">
            {scale.map(([c, v]) => (
              <li key={v} className="flex h-[17px] items-stretch">
                <span className={`w-[27px] border-r border-b border-l border-black ${c}`} />
                <span className="w-[6px] border-b border-black" />
                <span className="flex-1 text-right leading-[17px]">{v}</span>
              </li>
            ))}
          </ul>
        </div>
        <dl className="mt-[8px] grid h-[36px] grid-cols-[61px_16px_29px] content-center border border-t-[#dbe5f4] border-r-[#a6a6ea] border-b-[#a6a6ea] border-l-[#dbe5f4] bg-[#eff3fa] text-right leading-[17px]">
          <dt>Max</dt>
          <dd className="text-center">:</dd>
          <dd>0.02</dd>
          <dt className="pr-[3px]">Min</dt>
          <dd className="text-center">:</dd>
          <dd>-0.11</dd>
        </dl>
        <div className="mt-[138px] self-end">
          <SmallBtn n="zoomBox" />
        </div>
      </div>
    </div>
    <div className="flex h-[23px] items-start gap-[7px] pl-[3px]">
      {["colorList", "scales", "microDark"].map((n, i) => (
        <button
          key={n}
          aria-label={n}
          className={i === 0 ? "flex h-[19px] w-[22px] items-center justify-center rounded-b-[3px] border border-t-0 border-[#b5dcdc] bg-[#f0f2f5]" : "flex h-[21px] w-[22px] items-center justify-center"}
        >
          <Icon n={n} />
        </button>
      ))}
    </div>
  </aside>
);

const modes: [string, string][] = [
  ["FANG", "w-[37px]"],
  ["RASTER", "w-[47px]"],
  ["KARTES", "w-[50px]"],
  ["OFANG", "w-[46px]"],
  ["HLINIEN", "w-[48px]"],
  ["DXF", "w-[28px]"],
];

export default function App() {
  return (
    <div className={`flex h-screen min-w-0 flex-col overflow-hidden bg-[#cfd3dc] text-[12px] leading-[16px] ${UI}`}>
      <header className="flex h-[23px] shrink-0 items-center bg-white pl-[3px] text-[#8c8c8c]">
        <svg width="15" height="16" viewBox="0 0 15 16" className="mr-[5px] overflow-visible" aria-hidden="true">
          <path d="M3 4 7 0h6l2 3v9l-3 3H6z" fill="#4f6791" stroke="#26344f" />
          <path d="M9 2v11M12 2v11" stroke="#8ba3cc" />
          <text x="0" y="14" fontSize="12" fontWeight="700" fontFamily="Liberation Sans" fill="#f6c520" stroke="#3a2c00" strokeWidth=".5">5</text>
        </svg>
        <h1 className="flex-1">RFEM 5.20.01 x64 - [1, RF-ZUSCHNITT]</h1>
        <div className="flex gap-[36px] pr-[18px]">
          {["M0 5.500h10", "M.5 2.500h7v7h-7zM2.500 2.500v-2h7v7h-2", "M.5.5l9 9M9.500.5l-9 9"].map((d, i) => (
            <button key={d} aria-label={["Minimieren", "Verkleinern", "Beenden"][i]}>
              <svg width="10" height="10" viewBox="0 0 10 10"><path d={d} fill="none" stroke="#888" /></svg>
            </button>
          ))}
        </div>
      </header>
      <nav className="flex h-[24px] shrink-0 items-center pl-[5px] text-[#3f434c]">
        <span className="mr-[3px] h-[14px] border-l-2 border-dotted border-[#a9afbd]" />
        <svg width="16" height="12" viewBox="0 0 16 12" className="mr-[10px]" aria-hidden="true">
          <rect width="16" height="12" fill="#1c2760" />
          <path d="M0 7.500h16M7.500 1v10M7.500 1 1 7M8 1l6 6M5 3v4M10 3v4" stroke="#fff" fill="none" />
        </svg>
        {menus.map(([t, u, w]) => (
          <button key={t} className={`${w} text-left whitespace-nowrap`}>
            {t.slice(0, u)}
            <u>{t[u]}</u>
            {t.slice(u + 1)}
          </button>
        ))}
        <div className="ml-auto flex gap-[6px] pr-[5px]">
          {["M0 7.500h8", "M.5 3.500h5v4h-5zM2.500 3v-2h5v5h-2", "M1 1l6 6M7 1 1 7"].map((d, i) => (
            <button key={d} aria-label={["Fenster minimieren", "Fenster verkleinern", "Fenster schließen"][i]}>
              <svg width="9" height="9" viewBox="0 0 9 9"><path d={d} fill="none" stroke="#555" /></svg>
            </button>
          ))}
        </div>
      </nav>
      <div className="flex h-[26px] shrink-0 pl-[2px]">
        <Plate>
          <Tools items="neu open cab1 cab2 save report print preview | undo redo | selPar selCirc selRing selPlus selWin | *list table | starLoad" />
          <span className="mx-[2px] flex h-[20px] w-[428px] items-center bg-white pr-[1px]">
            <select aria-label="Lastfall" className="h-full flex-1 appearance-none bg-white pl-[3px] text-[12px] text-black">
              <option>RF-ZUSCHNITT</option>
            </select>
            <span className="pointer-events-none flex h-[18px] w-[14px] items-center justify-center bg-[#dfe3eb]">
              <svg width="6" height="4" viewBox="0 0 6 4"><path d="M0 0h6L3 4z" fill="#555" /></svg>
            </span>
          </span>
          <Tools items="prev next *resP xxLoad *eye *xxx | glasses beadsWin beads" />
        </Plate>
        <Plate>
          <Tools items="handGrid snap *pl1 pl2 pl3 grid3 clampWin | link rotate mirror cross info gearDoc gears" />
        </Plate>
      </div>
      <div className="flex h-[26px] shrink-0 pl-[2px]">
        <Plate>
          <Tools items="node v line member v arc v | support support2 supportSurf | dim v dimxx frameGrid | surf v opening v shell v cupWin cupBox v | connect v load1 load2 load3 load4 load5 v" />
        </Plate>
        <Plate>
          <Tools items="hand zoomWin zoomX cube cubes | ax1 ax2 ax3 ax4 v micro v | clip v" />
        </Plate>
        <Plate>
          <Tools items="deform camera | iRed *fan solidRes reac *featherRes pick v iWave panelIcon | *legend cutWin v iso v" />
        </Plate>
        <Plate>
          <Tools items="scrDown scrUp pdfDown pdfUp" />
        </Plate>
      </div>
      <main className="flex min-h-0 flex-1">
        <Navigator />
        <div className="mr-[5px] mb-[2px] ml-[4px] min-w-0 flex-1 border-t border-l border-t-[#777] border-l-[#777] bg-white">
          <div className={`relative h-full text-[11px] leading-[14px] text-black ${ARIAL}`}>
            <Model />
            <p className="absolute top-[6px] left-[6px]">
              Verzerrungen Eps-y,+ [-]
              <br />
              Schnitte
              <br />
              RF-ZUSCHNITT
            </p>
            <p className="absolute bottom-[5px] left-[6px]">Max Eps-y,+: 0.02, Min Eps-y,+: -0.11 -</p>
            <Dialog />
          </div>
        </div>
        <ColorPanel />
      </main>
      <footer
        className={`flex h-[21px] shrink-0 items-center justify-end border-t border-[#9aa1ae] bg-gradient-to-b from-[#dfe2e9] via-[#a9afbb] to-[#b9bec8] pt-px text-[12px] text-[#222] ${DLG}`}
      >
        {modes.map(([t, w]) => (
          <button
            key={t}
            className={`${w} mr-[2px] h-[18px] border text-center leading-[16px] whitespace-nowrap ${
              t === "RASTER" ? "border-t-white border-r-[#777] border-b-[#777] border-l-white" : "border-t-black border-r-white border-b-white border-l-black"
            }`}
          >
            {t}
          </button>
        ))}
        {["w-[189px]", "w-[88px]", "w-[74px]", "w-[74px]", "w-[71px]"].map((w, i) => (
          <span key={i} className={`${w} h-[17px] border-l border-[#8e949f]`} />
        ))}
      </footer>
    </div>
  );
}
